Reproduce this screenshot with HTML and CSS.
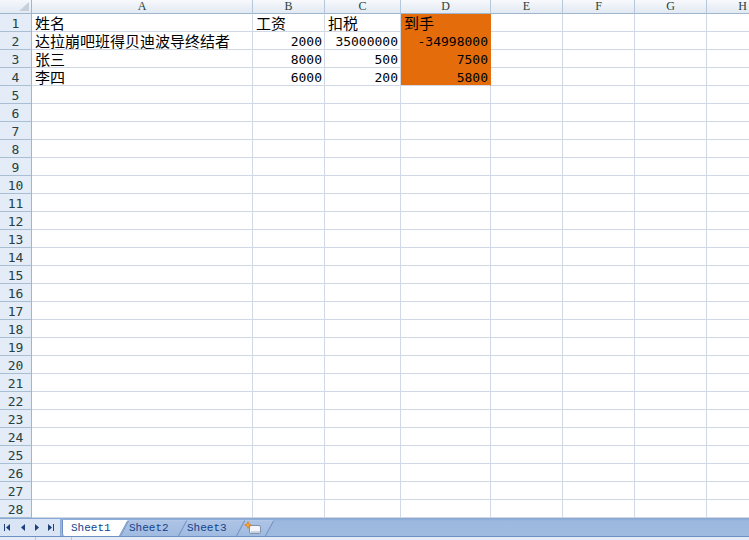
FILE: index.html
```html
<!DOCTYPE html>
<html>
<head>
  <meta charset="UTF-8">
  <title>Book1 - Sheet1</title>
  <link rel="stylesheet" href="styles.css">
</head>
<body>
  <div class="book">
    <div class="sheet" id="sheet">
      <div class="corner"></div>
      <div class="colhead">A</div>
      <div class="colhead">B</div>
      <div class="colhead">C</div>
      <div class="colhead">D</div>
      <div class="colhead">E</div>
      <div class="colhead">F</div>
      <div class="colhead">G</div>
      <div class="colhead">H</div>

      <div class="rowhead">1</div>
      <div class="cell">姓名</div>
      <div class="cell">工资</div>
      <div class="cell">扣税</div>
      <div class="cell fill">到手</div>
      <div class="cell"></div><div class="cell"></div><div class="cell"></div><div class="cell"></div>

      <div class="rowhead">2</div>
      <div class="cell">达拉崩吧班得贝迪波导终结者</div>
      <div class="cell num">2000</div>
      <div class="cell num">35000000</div>
      <div class="cell num fill">-34998000</div>
      <div class="cell"></div><div class="cell"></div><div class="cell"></div><div class="cell"></div>

      <div class="rowhead">3</div>
      <div class="cell">张三</div>
      <div class="cell num">8000</div>
      <div class="cell num">500</div>
      <div class="cell num fill">7500</div>
      <div class="cell"></div><div class="cell"></div><div class="cell"></div><div class="cell"></div>

      <div class="rowhead">4</div>
      <div class="cell">李四</div>
      <div class="cell num">6000</div>
      <div class="cell num">200</div>
      <div class="cell num fill last">5800</div>
      <div class="cell"></div><div class="cell"></div><div class="cell"></div><div class="cell"></div>
    </div>

    <div class="tabbar">
      <div class="tabnav">
        <svg width="60" height="17" viewBox="0 0 60 17">
          <g fill="#1f3f78">
            <rect x="4" y="5" width="1" height="7"/>
            <path d="M10 5 L6 8.5 L10 12 Z"/>
            <path d="M25 5 L21 8.5 L25 12 Z"/>
            <path d="M35 5 L39 8.5 L35 12 Z"/>
            <path d="M48 5 L52 8.5 L48 12 Z"/>
            <rect x="53" y="5" width="1" height="7"/>
          </g>
        </svg>
      </div>
      <div class="tabs">
        <div class="tab active">Sheet1</div>
        <div class="tab">Sheet2</div>
        <div class="tab">Sheet3</div>
        <div class="tab insert">
          <svg width="18" height="14" viewBox="0 0 18 14">
            <rect x="5.5" y="4.5" width="11" height="8" rx="1.5" fill="#f4f6fa" stroke="#7f93b0"/>
            <rect x="7" y="10" width="9" height="2" fill="#c9d2de"/>
            <path d="M4 0.5 L5 3 L7.5 4 L5 5 L4 7.5 L3 5 L0.5 4 L3 3 Z" fill="#f5a623" stroke="#d9751a" stroke-width="0.6"/>
          </svg>
        </div>
      </div>
    </div>
    <div class="statusbar"><span></span><span></span></div>
  </div>
  <script src="script.js"></script>
</body>
</html>
```

FILE: styles.css
```css
body {
  margin: 0;
  padding: 0;
  background-color: #ffffff;
  overflow: hidden;
}
.book {
  width: 749px;
  height: 540px;
  overflow: hidden;
  display: flex;
  flex-direction: column;
}
.sheet {
  display: grid;
  grid-template-columns: 32px 221px 72px 76px 90px 72px 72px 72px 72px;
  grid-template-rows: 14px;
  grid-auto-rows: 18px;
  height: 518px;
  overflow: hidden;
  flex: none;
}
.corner {
  position: relative;
  background: linear-gradient(#f4f7fb, #e3eaf3);
  border-right: 1px solid #9eb6ce;
  border-bottom: 1px solid #9eb6ce;
}
.corner::after {
  content: "";
  position: absolute;
  right: 2px;
  bottom: 2px;
  width: 10px;
  height: 9px;
  background-color: #c6d0dc;
  clip-path: polygon(100% 0, 100% 100%, 0 100%);
}
.colhead {
  background: linear-gradient(#f7f9fc, #e2e9f2);
  border-right: 1px solid #b6c7db;
  border-bottom: 1px solid #9eb6ce;
  color: #27413e;
  font-family: "Liberation Serif", serif;
  font-size: 12px;
  line-height: 13px;
  text-align: center;
}
.rowhead {
  background-color: #e4ecf7;
  border-right: 1px solid #9eb6ce;
  border-bottom: 1px solid #a9bdd3;
  color: #27413e;
  font-family: "DejaVu Sans Mono", monospace;
  font-size: 13px;
  line-height: 17px;
  padding-top: 1px;
  box-sizing: border-box;
  text-align: center;
}
.cell {
  border-right: 1px solid #d0d7e5;
  border-bottom: 1px solid #d0d7e5;
  font-family: "Noto Sans CJK SC", sans-serif;
  font-size: 15px;
  line-height: 17px;
  color: #000000;
  padding: 0 2px 0 3px;
  white-space: nowrap;
}
.cell.num {
  font-family: "DejaVu Sans Mono", monospace;
  font-size: 13px;
  padding-top: 1px;
  box-sizing: border-box;
  text-align: right;
}
.cell.fill {
  background-color: #e46c0a;
  border-right-color: #e46c0a;
  border-bottom-color: #e46c0a;
}
.cell.fill.last {
  border-bottom-color: #d0d7e5;
}
.tabbar {
  display: flex;
  height: 18px;
  flex: none;
  background: linear-gradient(#86a5d3 0, #9db8de 3px, #a0bbe0 100%);
  border-bottom: 1px solid #6b90c6;
}
.tabnav {
  width: 60px;
  height: 17px;
  margin-top: 1px;
  background-color: #d9e5f4;
  border-right: 1px solid #8eaad3;
}
.tabnav svg {
  display: block;
}
.tabs {
  display: flex;
  margin-left: 1px;
  margin-top: 2px;
}
.tab {
  position: relative;
  z-index: 1;
  width: 58px;
  height: 16px;
  padding-left: 9px;
  box-sizing: border-box;
  font-family: "Liberation Mono", monospace;
  font-size: 11px;
  line-height: 16px;
  color: #15428b;
}
.tab::before {
  content: "";
  position: absolute;
  top: 0;
  bottom: 0;
  left: 0;
  right: 0;
  z-index: -1;
  transform: skewX(-28deg);
  transform-origin: bottom left;
  border-left: 1px solid #6f8fc4;
  border-top: 1px solid #b3c8e7;
  background: linear-gradient(#adc3e5, #a0bbe0);
}
.tab.active {
  z-index: 2;
}
.tab.active::before {
  background: #ffffff;
  border-right: 1px solid #6f8fc4;
  border-top-color: #ffffff;
}
.tab.active::after {
  content: "";
  position: absolute;
  top: 0;
  bottom: 0;
  left: 0;
  width: 14px;
  z-index: -1;
  background: #ffffff;
  border-left: 1px solid #6f8fc4;
  border-bottom-left-radius: 3px;
}
.tab.insert {
  width: 30px;
  padding-left: 8px;
}
.tab.insert::before {
  border-right: 1px solid #6f8fc4;
}
.tab.insert svg {
  display: block;
  margin-top: 1px;
}
.statusbar {
  flex: 1;
  display: flex;
  background-color: #e4ebf6;
}
.statusbar span {
  width: 35px;
  border-right: 1px solid #b9c7da;
}
```

FILE: script.js
```js
// Fill the empty rows 5..28 below the data
const sheet = document.getElementById('sheet');
for (let r = 5; r <= 28; r++) {
  const head = document.createElement('div');
  head.className = 'rowhead';
  head.textContent = r;
  sheet.appendChild(head);
  for (let c = 0; c < 8; c++) {
    const cell = document.createElement('div');
    cell.className = 'cell';
    sheet.appendChild(cell);
  }
}
```
